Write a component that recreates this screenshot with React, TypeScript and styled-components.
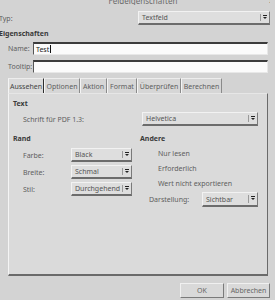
import React from 'react';
import styled, { createGlobalStyle } from 'styled-components';

const GlobalStyle = createGlobalStyle`
  html, body {
    margin: 0;
    padding: 0;
    background: #d3d3d3;
    overflow: hidden;
  }
  body {
    font-family: "Noto Sans", "Open Sans", sans-serif;
    font-size: 7px;
    color: #5a5a5a;
  }
`;

// Fenster
const Dialog = styled.div`
  width: 275px;
  height: 300px;
  display: flex;
  flex-direction: column;
  box-sizing: border-box;
  padding-right: 5px;
`;

const TitleBar = styled.div`
  height: 5px;
  overflow: hidden;
  position: relative;
  display: flex;
  justify-content: center;
  align-items: flex-end;
  padding-left: 16px;
`;

const TitleText = styled.span`
  font-size: 8px;
  line-height: 10px;
  margin-bottom: -1px;
  color: #6a6a6a;
`;

const CloseMark = styled.span`
  position: absolute;
  right: -3px;
  bottom: 0;
  font-size: 7px;
  line-height: 8px;
  color: #555;
`;

const Row = styled.div<{ $top: number; $height: number; $indent?: number }>`
  display: flex;
  align-items: center;
  margin-top: ${p => p.$top}px;
  height: ${p => p.$height}px;
  padding-left: ${p => p.$indent ?? 0}px;
`;

const Label = styled.span<{ $width?: number }>`
  width: ${p => (p.$width ? `${p.$width}px` : 'auto')};
  flex-shrink: 0;
  white-space: nowrap;
  color: #5e5e5e;
`;

const Heading = styled.div<{ $top: number; $indent?: number }>`
  margin-top: ${p => p.$top}px;
  height: 10px;
  line-height: 10px;
  padding-left: ${p => p.$indent ?? 0}px;
  font-weight: bold;
  color: #3a3a3a;
  white-space: nowrap;
`;

const TextInput = styled.div`
  flex: 1;
  height: 100%;
  box-sizing: border-box;
  background: #fbfbfb;
  border-top: 2px solid #3c3c3c;
  border-left: 1px solid #555;
  border-right: 1px solid #e8e8e8;
  border-bottom: 1px solid #e8e8e8;
  padding-left: 2px;
  display: flex;
  align-items: center;
  color: #222;
`;

const Caret = styled.span`
  display: inline-block;
  width: 1px;
  height: 8px;
  background: #111;
  margin-left: 0.5px;
`;

// Auswahlfeld
const SelectBox = styled.div<{ $width?: number }>`
  width: ${p => (p.$width ? `${p.$width}px` : 'auto')};
  flex: ${p => (p.$width ? '0 0 auto' : '1')};
  height: 100%;
  box-sizing: border-box;
  background: #dedede;
  border-top: 1px solid #f2f2f2;
  border-left: 1px solid #f2f2f2;
  border-right: 1px solid #7a7a7a;
  border-bottom: 2px solid #6c6c6c;
  display: flex;
  align-items: center;
  color: #555;
  white-space: nowrap;
`;

const SelectText = styled.span`
  flex: 1;
  padding-left: 3px;
  overflow: hidden;
`;

const ArrowCell = styled.span`
  width: 8px;
  height: 70%;
  border-left: 1px solid #9a9a9a;
  display: flex;
  align-items: center;
  justify-content: center;
`;

const Arrow = styled.span`
  width: 0;
  height: 0;
  border-left: 2px solid transparent;
  border-right: 2px solid transparent;
  border-top: 2px solid #222;
  position: relative;
  &::before {
    content: '';
    position: absolute;
    left: -2px;
    top: -4px;
    width: 4px;
    height: 1px;
    background: #222;
  }
`;

const Select = ({ value, width }: { value: string; width?: number }) => (
  <SelectBox $width={width}>
    <SelectText>{value}</SelectText>
    <ArrowCell>
      <Arrow />
    </ArrowCell>
  </SelectBox>
);

// Reiter
const TabBar = styled.div`
  margin-top: 5px;
  margin-left: 8px;
  height: 15px;
  display: flex;
  align-items: flex-end;
`;

const Tab = styled.div<{ $active?: boolean; $width: number }>`
  width: ${p => p.$width}px;
  height: 15px;
  box-sizing: border-box;
  display: flex;
  align-items: center;
  justify-content: center;
  background: ${p => (p.$active ? '#dbdbdb' : '#d6d6d6')};
  border-top: 1px solid #ededed;
  border-left: 1px solid #f4f4f4;
  border-right: 1px solid ${p => (p.$active ? '#2e2e2e' : '#8a8a8a')};
  color: ${p => (p.$active ? '#444' : '#5e5e5e')};
  white-space: nowrap;
`;

const Panel = styled.div`
  margin-left: 8px;
  width: 260px;
  height: 183px;
  box-sizing: border-box;
  background: #dadada;
  border-left: 1px solid #f4f4f4;
  border-top: 1px solid #e6e6e6;
  border-right: 1px solid #6a6a6a;
  border-bottom: 2px solid #6a6a6a;
  display: flex;
  flex-direction: column;
`;

const Columns = styled.div`
  display: grid;
  grid-template-columns: 127px 1fr;
`;

const Column = styled.div`
  display: flex;
  flex-direction: column;
`;

const Stack = styled.div<{ $top: number; $gap: number }>`
  display: flex;
  flex-direction: column;
  gap: ${p => p.$gap}px;
  margin-top: ${p => p.$top}px;
`;

const OptionLine = styled.div`
  height: 14px;
  line-height: 14px;
  padding-left: 22px;
  white-space: nowrap;
  color: #5e5e5e;
`;

const ButtonRow = styled.div`
  margin-top: 7px;
  height: 15px;
  display: flex;
  justify-content: flex-end;
  gap: 3px;
`;

const Button = styled.div<{ $width: number }>`
  width: ${p => p.$width}px;
  height: 15px;
  box-sizing: border-box;
  background: #d9d9d9;
  border-top: 1px solid #f0f0f0;
  border-left: 1px solid #f0f0f0;
  border-right: 1px solid #7a7a7a;
  border-bottom: 1px solid #7a7a7a;
  display: flex;
  align-items: center;
  justify-content: center;
  color: #666;
`;

export default function App() {
  return (
    <>
      <GlobalStyle />
      <Dialog>
        <TitleBar>
          <TitleText>Feldeigenschaften</TitleText>
          <CloseMark>x</CloseMark>
        </TitleBar>

        <Row $top={6} $height={14}>
          <Label $width={139} style={{ marginLeft: -1 }}>Typ:</Label>
          <Select value="Textfeld" />
        </Row>

        <Heading $top={4} style={{ marginLeft: -1 }}>Eigenschaften</Heading>

        <Row $top={3} $height={13} $indent={8}>
          <Label $width={25}>Name:</Label>
          <TextInput style={{ marginRight: 2 }}>
            Test<Caret />
          </TextInput>
        </Row>

        <Row $top={5} $height={13} $indent={8}>
          <Label $width={25}>Tooltip:</Label>
          <TextInput style={{ marginRight: 2 }} />
        </Row>

        <TabBar>
          <Tab $active $width={36}>Aussehen</Tab>
          <Tab $width={36}>Optionen</Tab>
          <Tab $width={27}>Aktion</Tab>
          <Tab $width={30}>Format</Tab>
          <Tab $width={44}>Überprüfen</Tab>
          <Tab $width={41}>Berechnen</Tab>
        </TabBar>

        <Panel>
          <Heading $top={5} $indent={4}>Text</Heading>
          <Row $top={3} $height={14} $indent={14}>
            <Label $width={119}>Schrift für PDF 1.3:</Label>
            <Select value="Helvetica" width={116} />
          </Row>

          <Columns>
            <Column>
              <Heading $top={8} $indent={4}>Rand</Heading>
              <Stack $top={4} $gap={3}>
                <Row $top={0} $height={14} $indent={14}>
                  <Label $width={48}>Farbe:</Label>
                  <Select value="Black" width={61} />
                </Row>
                <Row $top={0} $height={14} $indent={14}>
                  <Label $width={48}>Breite:</Label>
                  <Select value="Schmal" width={61} />
                </Row>
                <Row $top={0} $height={14} $indent={14}>
                  <Label $width={48}>Stil:</Label>
                  <Select value="Durchgehend" width={61} />
                </Row>
              </Stack>
            </Column>
            <Column>
              <Heading $top={8} $indent={4}>Andere</Heading>
              <Stack $top={3} $gap={1}>
                <OptionLine>Nur lesen</OptionLine>
                <OptionLine>Erforderlich</OptionLine>
                <OptionLine>Wert nicht exportieren</OptionLine>
                <Row $top={0} $height={15} $indent={13}>
                  <Label $width={53}>Darstellung:</Label>
                  <Select value="Sichtbar" width={56} />
                </Row>
              </Stack>
            </Column>
          </Columns>
        </Panel>

        <ButtonRow>
          <Button $width={44}>OK</Button>
          <Button $width={43}>Abbrechen</Button>
        </ButtonRow>
      </Dialog>
    </>
  );
}
